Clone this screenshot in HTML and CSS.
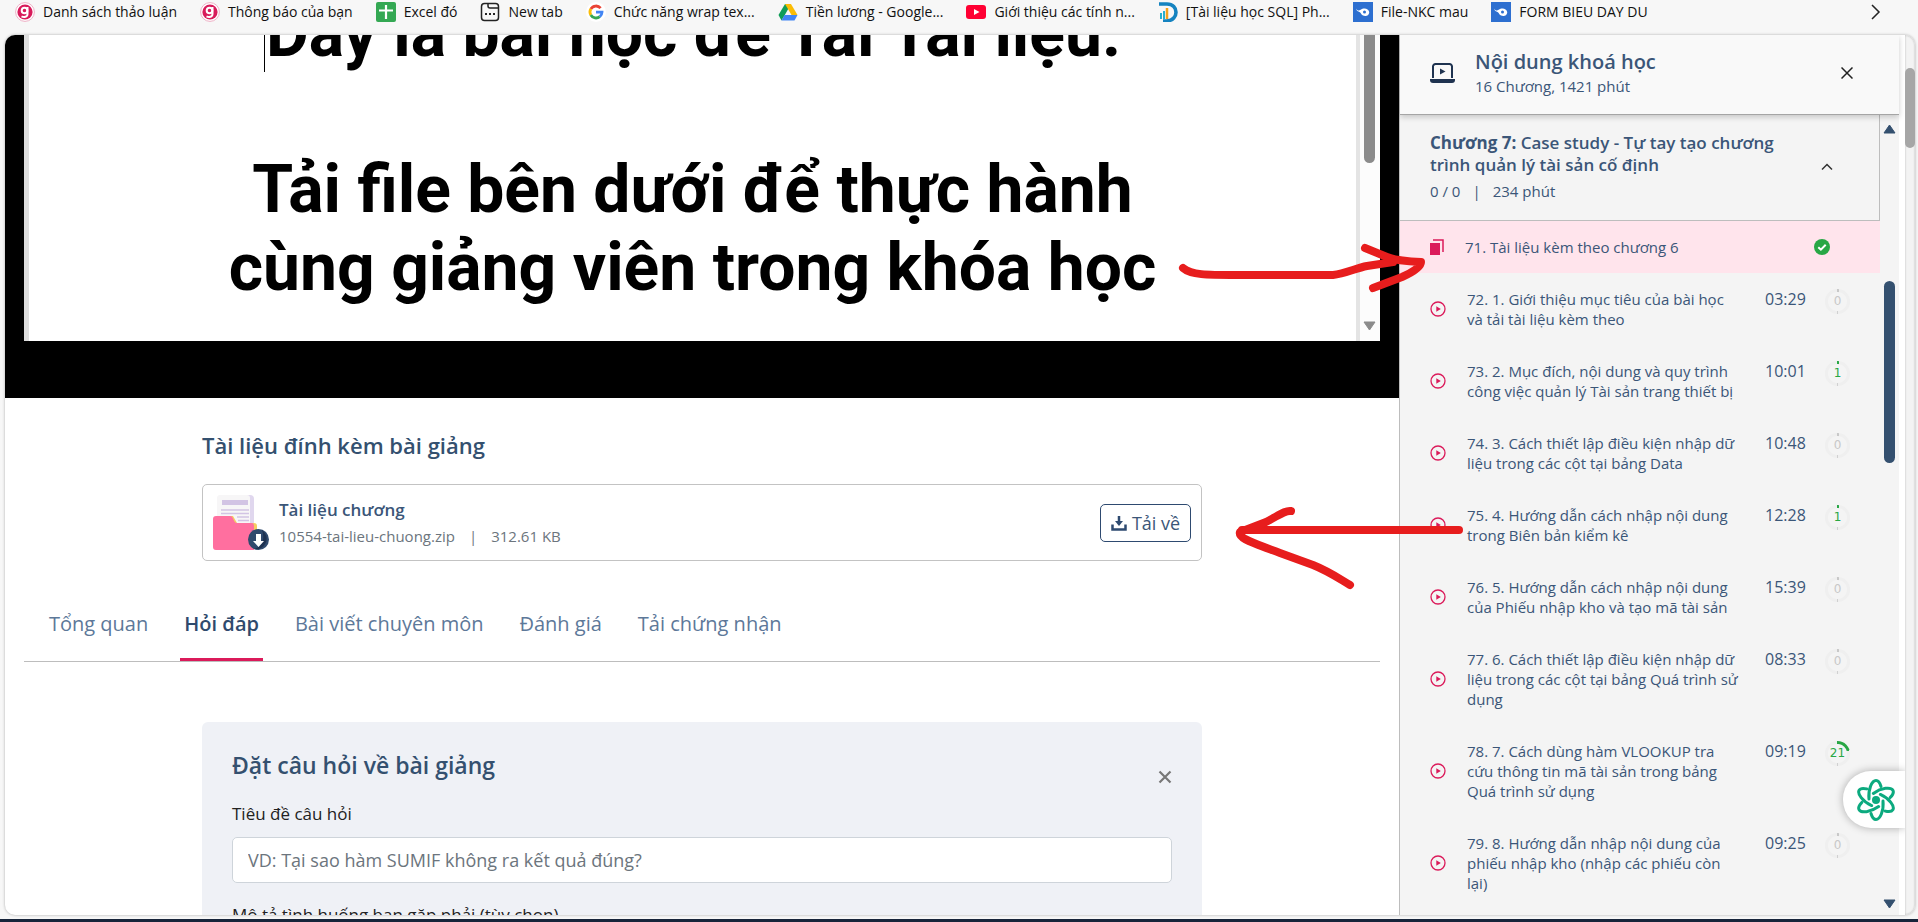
FILE: index.html
```
<!DOCTYPE html>
<html lang="vi">
<head>
    <meta charset="UTF-8">
    <meta name="viewport" content="width=device-width, initial-scale=1.0">
    <title>Nội dung khoá học</title>
    <link rel="stylesheet" href="styles.css">
</head>
<body>
    <svg class="sprite" aria-hidden="true">
        <symbol id="play" viewBox="0 0 16 16">
            <circle cx="8" cy="8" r="7" fill="none" stroke="#db1a5a" stroke-width="1.3"/>
            <path d="M6.3 5.2v5.6L10.8 8z" fill="#db1a5a"/>
        </symbol>
        <symbol id="gitiho" viewBox="0 0 20 20">
            <circle cx="10" cy="10" r="9.4" fill="#fff" stroke="#eeb0c6" stroke-width="1"/>
            <circle cx="10" cy="10" r="7.6" fill="#d81b5b"/>
            <circle cx="9.500" cy="8.500" r="2.800" fill="none" stroke="#fff" stroke-width="2"/>
            <path d="M12.500 5v7c0 3-3.500 3.600-6 2.300" fill="none" stroke="#fff" stroke-width="2"/>
        </symbol>
        <symbol id="doc" viewBox="0 0 20 20">
            <path d="M0 0h20v20H0z" fill="#2d6fd0"/>
            <path d="M3 6.500c1.500 2.500 3 2.600 4.600 1.300 3-2.500 8-1.600 8.600 2.200.4 3-3.200 5-6.200 3.600-2-.9-1.800-2.700-3.500-3.600C5 9.300 3.500 9 3 6.500z" fill="#fff"/>
            <circle cx="11.500" cy="10" r="1.500" fill="#2d6fd0"/>
        </symbol>
    </svg>

    <nav class="bookmarks">
        <a class="bookmark" href="#"><svg class="favicon"><use href="#gitiho"/></svg>Danh sách thảo luận</a>
        <a class="bookmark" href="#"><svg class="favicon"><use href="#gitiho"/></svg>Thông báo của bạn</a>
        <a class="bookmark" href="#">
            <svg class="favicon" viewBox="0 0 20 20"><rect width="20" height="20" rx="2" fill="#34a853"/><path d="M10 3v14M3 8.500h14" stroke="#fff" stroke-width="2.200"/></svg>Excel đó</a>
        <a class="bookmark" href="#">
            <svg class="favicon" viewBox="0 0 20 20" fill="none" stroke="#222" stroke-width="1.500"><rect x="1.500" y="1.500" width="17" height="17" rx="3"/><path d="M8 2v2a2 2 0 0 0 2 2h8"/><path d="M5 12h2M9 12h2M13 12h2" stroke-width="2"/></svg>New tab</a>
        <a class="bookmark" href="#">
            <svg class="favicon" viewBox="0 0 20 20" fill="none" stroke-width="2.800"><circle cx="10" cy="10" r="10" fill="#fff"/><path d="M14.600 6.200A6 6 0 0 0 4.800 7" stroke="#ea4335"/><path d="M4.800 7a6 6 0 0 0 0 6" stroke="#fbbc05"/><path d="M4.800 13a6 6 0 0 0 9 1.600" stroke="#34a853"/><path d="M13.800 14.600A6 6 0 0 0 16 10.200h-6" stroke="#4285f4"/></svg>Chức năng wrap tex...</a>
        <a class="bookmark" href="#">
            <svg class="favicon" viewBox="0 0 20 20"><path d="M7 2h6l-6.500 11.500L3.500 18.500.500 13z" fill="#0f9d58"/><path d="M7 2h6l6.500 11h-6z" fill="#fbbc04"/><path d="M6.500 13h13l-3 5.500h-13z" fill="#4285f4"/></svg>Tiền lương - Google...</a>
        <a class="bookmark" href="#">
            <svg class="favicon" viewBox="0 0 20 20"><rect y="3" width="20" height="14" rx="3" fill="#ff0033"/><path d="M8 7v6l5.500-3z" fill="#fff"/></svg>Giới thiệu các tính n...</a>
        <a class="bookmark" href="#">
            <svg class="favicon" viewBox="0 0 20 20"><path d="M1 2h8c12 0 12 16 0 17H5" fill="none" stroke="#1583c0" stroke-width="3.600"/><path d="M3 11v6M6 9v8" stroke="#27b0cf" stroke-width="2"/><path d="M9 6v11" stroke="#f6a21b" stroke-width="2.500"/></svg>[Tài liệu học SQL] Ph...</a>
        <a class="bookmark" href="#"><svg class="favicon"><use href="#doc"/></svg>File-NKC mau</a>
        <a class="bookmark" href="#"><svg class="favicon"><use href="#doc"/></svg>FORM BIEU DAY DU</a>
        <button class="more" aria-label="Thêm">
            <svg width="10" height="16" viewBox="0 0 10 16" fill="none" stroke="#222" stroke-width="1.500"><path d="M1 1l7 7-7 7"/></svg>
        </button>
    </nav>

    <div class="window">
        <main class="lesson">
            <div class="viewer">
                <div class="slide">
                    <p><span class="caret">Đây là bài học để Tải Tài liệu.</span></p>
                    <p>&nbsp;</p>
                    <p>Tải file bên dưới để thực hành</p>
                    <p>cùng giảng viên trong khóa học</p>
                </div>
                <div class="slide-scroll">
                    <span class="slide-thumb"></span>
                    <svg width="13" height="10" viewBox="0 0 13 10"><path d="M1 1h11L6.500 9z" fill="#8b8b8b" stroke="#8b8b8b" stroke-linejoin="round"/></svg>
                </div>
            </div>

            <section class="attachments">
                <h2>Tài liệu đính kèm bài giảng</h2>
                <div class="file">
                    <svg class="file-icon" viewBox="0 0 56 56">
                        <path d="M8 0h29a4 4 0 0 1 4 4v30H8z" fill="#e0d7ee"/>
                        <path d="M7 0h27a3 3 0 0 1 3 3v32H4V3a3 3 0 0 1 3-3z" fill="#f7f6f7"/>
                        <path d="M9 5h26v5H9z" fill="#d2c4e4"/>
                        <path d="M8 15h28M8 18.500h28M24 22h12M25 25.500h11" stroke="#d2c4e4" stroke-width="1.500"/>
                        <path d="M17 21h3l4 7h17a3 3 0 0 1 3 3v10H25z" fill="#f5ce62"/>
                        <path d="M3 21h14c4 0 3 7 7 7h14c3 0 3 2 3 4v23H3a3 3 0 0 1-3-3V24a3 3 0 0 1 3-3z" fill="#ff6f9f"/>
                        <circle cx="45.500" cy="44.500" r="10.500" fill="#2f4a6d"/>
                        <path d="M49 35a10.500 10.500 0 0 1-8 19c9-2 11-11 8-19z" fill="#1d3150"/>
                        <path d="M43 39h5v7h3l-5.500 6-5.500-6h3z" fill="#fff"/>
                    </svg>
                    <div class="file-info">
                        <strong>Tài liệu chương</strong>
                        <p><span>10554-tai-lieu-chuong.zip</span><span>|</span><span>312.61 KB</span></p>
                    </div>
                    <button class="download">
                        <svg width="16" height="16" viewBox="0 0 16 16" fill="none" stroke="#2e4a70" stroke-width="2.500"><path d="M1.500 9.500v5h13v-5M8 1v6"/><path d="M4 6h8l-4 5z" fill="#2e4a70" stroke="none"/></svg>
                        Tải về
                    </button>
                </div>
            </section>

            <nav class="tabs">
                <a href="#">Tổng quan</a>
                <a class="active" href="#">Hỏi đáp</a>
                <a href="#">Bài viết chuyên môn</a>
                <a href="#">Đánh giá</a>
                <a href="#">Tải chứng nhận</a>
            </nav>

            <form class="question">
                <div class="question-head">
                    <h2>Đặt câu hỏi về bài giảng</h2>
                    <button type="button" class="close" aria-label="Đóng">
                        <svg width="14" height="14" viewBox="0 0 14 14" stroke="#777" stroke-width="2.200"><path d="M1.500 1.500l11 11M12.500 1.500l-11 11"/></svg>
                    </button>
                </div>
                <label for="title">Tiêu đề câu hỏi</label>
                <input type="text" id="title" placeholder="VD: Tại sao hàm SUMIF không ra kết quả đúng?">
                <label for="detail">Mô tả tình huống bạn gặp phải (tùy chọn)</label>
                <textarea id="detail"></textarea>
            </form>
        </main>

        <aside class="sidebar">
            <header class="course">
                <svg width="25" height="20" viewBox="0 0 25 20"><path d="M3 15V3.500A2.500 2.500 0 0 1 5.500 1h14A2.500 2.500 0 0 1 22 3.500V15" fill="none" stroke="#1f3350" stroke-width="2"/><path d="M10 5.500v6l5.500-3z" fill="#1f3350"/><path d="M0 16h25v1a3 3 0 0 1-3 3H3a3 3 0 0 1-3-3z" fill="#1f3350"/></svg>
                <div class="course-title">
                    <h2>Nội dung khoá học</h2>
                    <p>16 Chương, 1421 phút</p>
                </div>
                <button class="close" aria-label="Đóng">
                    <svg width="12" height="12" viewBox="0 0 12 12" stroke="#222" stroke-width="1.500"><path d="M.5.5l11 11M11.500.5l-11 11"/></svg>
                </button>
            </header>
            <div class="outline">
                <div class="lessons">
                    <div class="chapter">
                        <div>
                            <h3><strong>Chương 7:</strong> Case study - Tự tay tạo chương trình quản lý tài sản cố định</h3>
                            <p><span>0 / 0</span><span>|</span><span>234 phút</span></p>
                        </div>
                        <button class="close" aria-label="Thu gọn">
                            <svg width="12" height="8" viewBox="0 0 12 8" fill="none" stroke="#333" stroke-width="1.500"><path d="M1 6.500l5-5 5 5"/></svg>
                        </button>
                    </div>
                    <a class="current" href="#">
                        <svg width="14" height="16" viewBox="0 0 14 16"><path d="M0 4h10v12H0z" fill="#db1a5a"/><path d="M3 1h10v12" fill="none" stroke="#db1a5a" stroke-width="1.500"/></svg>
                        <span>71. Tài liệu kèm theo chương 6</span>
                        <svg width="16" height="16" viewBox="0 0 16 16"><circle cx="8" cy="8" r="8" fill="#28a745"/><path d="M4.300 8.200l2.600 2.500 4.800-5" fill="none" stroke="#fff" stroke-width="2"/></svg>
                    </a>
                    <a class="item" href="#"><svg class="play"><use href="#play"/></svg><span class="name">72. 1. Giới thiệu mục tiêu của bài học và tải tài liệu kèm theo</span><time>03:29</time><span class="ring">0</span></a>
                    <a class="item" href="#"><svg class="play"><use href="#play"/></svg><span class="name">73. 2. Mục đích, nội dung và quy trình công việc quản lý Tài sản trang thiết bị</span><time>10:01</time><span class="ring started">1</span></a>
                    <a class="item" href="#"><svg class="play"><use href="#play"/></svg><span class="name">74. 3. Cách thiết lập điều kiện nhập dữ liệu trong các cột tại bảng Data</span><time>10:48</time><span class="ring">0</span></a>
                    <a class="item" href="#"><svg class="play"><use href="#play"/></svg><span class="name">75. 4. Hướng dẫn cách nhập nội dung trong Biên bản kiểm kê</span><time>12:28</time><span class="ring started">1</span></a>
                    <a class="item" href="#"><svg class="play"><use href="#play"/></svg><span class="name">76. 5. Hướng dẫn cách nhập nội dung của Phiếu nhập kho và tạo mã tài sản</span><time>15:39</time><span class="ring">0</span></a>
                    <a class="item" href="#"><svg class="play"><use href="#play"/></svg><span class="name">77. 6. Cách thiết lập điều kiện nhập dữ liệu trong các cột tại bảng Quá trình sử dụng</span><time>08:33</time><span class="ring">0</span></a>
                    <a class="item" href="#"><svg class="play"><use href="#play"/></svg><span class="name">78. 7. Cách dùng hàm VLOOKUP tra cứu thông tin mã tài sản trong bảng Quá trình sử dụng</span><time>09:19</time><span class="ring started" style="--done: 21%">21</span></a>
                    <a class="item" href="#"><svg class="play"><use href="#play"/></svg><span class="name">79. 8. Hướng dẫn nhập nội dung của phiếu nhập kho (nhập các phiếu còn lại)</span><time>09:25</time><span class="ring">0</span></a>
                </div>
                <div class="outline-scroll">
                    <svg width="13" height="10" viewBox="0 0 13 10"><path d="M1 9h11L6.500 1z" fill="#34506f" stroke="#34506f" stroke-linejoin="round"/></svg>
                    <div class="outline-track"><span class="outline-thumb"></span></div>
                    <svg width="13" height="10" viewBox="0 0 13 10"><path d="M1 1h11L6.500 9z" fill="#34506f" stroke="#34506f" stroke-linejoin="round"/></svg>
                </div>
            </div>
        </aside>
        <div class="page-scroll"><span class="page-thumb"></span></div>

        <button class="assistant" aria-label="Trợ lý">
            <svg width="40" height="42" viewBox="-20 -21 40 42" fill="none" stroke="#0caa7f" stroke-width="3" stroke-linecap="round">
                <circle r="4" fill="#0caa7f" stroke="none"/>
                <g id="arm"><path d="M-7-1C-8-11-4-19.500 0-19.500c2.500 0 4 2.500 5 6"/></g>
                <use href="#arm" transform="rotate(60)"/>
                <use href="#arm" transform="rotate(120)"/>
                <use href="#arm" transform="rotate(180)"/>
                <use href="#arm" transform="rotate(240)"/>
                <use href="#arm" transform="rotate(300)"/>
            </svg>
        </button>
    </div>
    <div class="taskbar"></div>

    <!-- hand-drawn arrows -->
    <svg class="arrows" viewBox="0 0 1918 922" fill="none" stroke="#e71d1d" stroke-width="8" stroke-linecap="round" stroke-linejoin="round">
        <path d="M1183 268C1191 275 1206 275 1237 275H1333C1345 274 1356 268 1367 266L1393 262"/>
        <path d="M1365 248L1387 257Q1397 261 1421 262C1421 267 1411 273 1402 277L1373 288"/>
        <path d="M1459 530H1242"/>
        <path d="M1291 511C1285 510 1278 516 1266 522L1240 532C1238 538 1248 541 1280 553L1313 565C1328 571 1335 576 1350 585"/>
    </svg>
</body>
</html>
```
FILE: styles.css
```
* {
    box-sizing: border-box;
}
body {
    margin: 0;
    height: 100vh;
    display: flex;
    flex-direction: column;
    overflow: hidden;
    background-color: #f7f7f7;
    color: #3b5678;
    font-family: "Open Sans", "Noto Sans", sans-serif;
    font-size: 15px;
    line-height: 20px;
}
h2, h3, p {
    margin: 0;
    font-weight: 600;
}
p {
    font-weight: 400;
}
a {
    color: inherit;
    text-decoration: none;
}
button {
    padding: 0;
    border: none;
    background: none;
    font: inherit;
    color: inherit;
    cursor: pointer;
}
svg {
    display: block;
    flex: none;
}
.sprite {
    position: absolute;
    width: 0;
    height: 0;
}

/* bookmarks bar */
.bookmarks {
    height: 35px;
    flex: none;
    display: flex;
    align-items: flex-start;
    gap: 23px;
    padding: 2px 37px 0 15px;
    color: #111;
    font-size: 14px;
    white-space: nowrap;
}
.bookmark {
    display: flex;
    align-items: center;
    gap: 8px;
}
.favicon {
    width: 20px;
    height: 20px;
}
.more {
    margin-left: auto;
    padding-top: 2px;
}

/* browser page */
.window {
    position: relative;
    flex: 1;
    min-height: 0;
    display: flex;
    margin: 0 3px 4px 5px;
    border-radius: 10px;
    overflow: hidden;
    background-color: #fff;
    box-shadow: 0 0 3px rgba(0, 0, 0, 0.3);
}
.taskbar {
    height: 3px;
    flex: none;
    background-color: #17243a;
}
.lesson {
    flex: 1;
    min-width: 0;
    overflow: hidden;
}
.viewer {
    height: 363px;
    display: flex;
    padding: 0 19px 57px;
    background-color: #000;
}
.slide {
    flex: 1;
    display: flex;
    flex-direction: column;
    justify-content: flex-end;
    overflow: hidden;
    padding-bottom: 34px;
    border-left: 5px solid #dedede;
    background-color: #fff;
    color: #000;
    font-family: Roboto, sans-serif;
    font-size: 66px;
    line-height: 78px;
    text-align: center;
    white-space: nowrap;
}
.slide p {
    flex: none;
    font-weight: 700;
}
.caret {
    border-left: 1px solid #000;
}
.slide-scroll {
    width: 24px;
    display: flex;
    flex-direction: column;
    justify-content: space-between;
    align-items: center;
    padding: 0 2px 10px 0;
    border-left: 4px solid #e4e4e4;
    background-color: #fcfcfc;
}
.slide-thumb {
    width: 11px;
    height: 128px;
    border-radius: 0 0 6px 6px;
    background-color: #8b8b8b;
}

/* attachments */
.attachments {
    max-width: 1000px;
    margin: 32px auto 0;
}
.attachments h2,
.question h2 {
    color: #34506f;
    font-size: 22px;
    line-height: 30px;
}
.file {
    display: flex;
    align-items: center;
    height: 77px;
    margin-top: 24px;
    padding: 0 10px;
    border: 1px solid #c3c3c3;
    border-radius: 5px;
}
.file-icon {
    width: 56px;
    height: 56px;
}
.file-info {
    flex: 1;
    margin-left: 10px;
}
.file-info strong {
    display: block;
    font-size: 17px;
    line-height: 26px;
    font-weight: 600;
}
.file-info p {
    display: flex;
    gap: 14px;
    line-height: 26px;
    color: #6c757d;
}
.download {
    display: flex;
    align-items: center;
    justify-content: center;
    gap: 5px;
    width: 91px;
    height: 38px;
    border: 1px solid #2e4a70;
    border-radius: 5px;
    font-size: 18px;
}

/* tabs */
.tabs {
    display: flex;
    gap: 28px;
    margin: 31px 19px 0;
    padding-left: 21px;
    border-bottom: 1px solid #bdbdbd;
    color: #5d7899;
    font-size: 20px;
    line-height: 24px;
}
.tabs a {
    padding: 20px 4px 22px;
    border-bottom: 3px solid transparent;
}
.tabs .active {
    border-color: #db1a5a;
    color: #2f4a6d;
    font-weight: 600;
}

/* question form */
.question {
    max-width: 1000px;
    margin: 60px auto 0;
    padding: 28px 30px;
    border-radius: 6px;
    background-color: #eff1f6;
}
.question-head {
    display: flex;
    justify-content: space-between;
}
.question h2 {
    font-size: 23px;
}
.question-head .close {
    margin-top: 20px;
}
.question label {
    display: block;
    margin-top: 20px;
    color: #222;
    font-size: 17px;
    line-height: 24px;
}
.question-head + label {
    margin-top: 18px;
}
.question input,
.question textarea {
    display: block;
    width: 100%;
    height: 46px;
    margin-top: 11px;
    padding: 0 15px;
    border: 1px solid #ced4da;
    border-radius: 5px;
    background-color: #fff;
    font: inherit;
    font-size: 18px;
}
.question input::placeholder {
    color: #6c757d;
}

/* course sidebar */
.sidebar {
    width: 506px;
    flex: none;
    display: flex;
    flex-direction: column;
    padding-right: 6px;
    border-left: 1px solid #bdbdbd;
}
.course {
    position: relative;
    display: flex;
    align-items: center;
    height: 80px;
    flex: none;
    padding: 0 46px 4px 30px;
    border-bottom: 1px solid #a5a5a5;
    background-color: #f9f9f9;
    box-shadow: 0 2px 6px rgba(0, 0, 0, 0.2);
}
.course-title {
    flex: 1;
    padding: 0 20px;
}
.course h2 {
    font-size: 20px;
    line-height: 26px;
}
.course p,
.chapter p {
    line-height: 22px;
}
.outline {
    flex: 1;
    min-height: 0;
    display: flex;
    background-color: #f4f4f4;
}
.lessons {
    flex: 1;
    overflow: hidden;
}
.chapter {
    display: flex;
    align-items: center;
    justify-content: space-between;
    height: 106px;
    padding: 0 46px 2px 30px;
    border: solid #bdbdbd;
    border-width: 0 1px 1px 0;
}
.chapter h3 {
    max-width: 360px;
    font-size: 17px;
    line-height: 22px;
}
.chapter strong {
    font-weight: 700;
}
.chapter p {
    display: flex;
    gap: 12px;
    margin-top: 4px;
}
.current {
    display: flex;
    align-items: center;
    height: 52px;
    padding: 0 50px 0 30px;
    background-color: #ffe4ec;
}
.current span {
    flex: 1;
    margin-left: 21px;
}
.item {
    display: flex;
    align-items: flex-start;
    padding: 16px 30px 16px 30px;
}
.play {
    align-self: center;
    width: 16px;
    height: 16px;
}
.name {
    flex: 1;
    margin: 0 26px 0 21px;
}
.item time {
    width: 41px;
    font-size: 16px;
}
.ring {
    --done: 2%;
    width: 25px;
    height: 25px;
    margin-left: 19px;
    border-radius: 50%;
    background: radial-gradient(#f4f4f4 9px, transparent 10px), conic-gradient(currentColor var(--done), #efefef 0 49%, #d0d0d0 0 51%, #efefef 0);
    color: #c8c8c8;
    font-family: "DejaVu Sans", sans-serif;
    font-size: 12px;
    line-height: 25px;
    text-align: center;
}
.ring.started {
    color: #28a745;
}
.outline-scroll {
    width: 19px;
    display: flex;
    flex-direction: column;
    align-items: center;
    padding: 9px 0 6px;
}
.outline-track {
    flex: 1;
    padding-top: 147px;
}
.outline-thumb {
    display: block;
    width: 11px;
    height: 182px;
    border-radius: 6px;
    background-color: #34506f;
}
.page-scroll {
    width: 10px;
    padding-top: 33px;
    border-radius: 0 10px 10px 0;
    background-color: #f3f3f3;
    box-shadow: inset 0 0 2px rgba(0, 0, 0, 0.3);
}
.page-thumb {
    display: block;
    height: 80px;
    border-radius: 5px;
    background-color: #a6a6a6;
}

/* floating controls */
.assistant {
    position: absolute;
    right: 10px;
    bottom: 87px;
    display: flex;
    align-items: center;
    width: 62px;
    height: 57px;
    padding-left: 13px;
    border-radius: 28px 0 0 28px;
    background-color: #fff;
    box-shadow: 0 0 8px rgba(0, 0, 0, 0.3);
    clip-path: inset(-10px 0 -10px -10px);
}
.arrows {
    position: absolute;
    top: 0;
    left: 0;
    width: 100%;
    height: 100%;
    pointer-events: none;
}
```
